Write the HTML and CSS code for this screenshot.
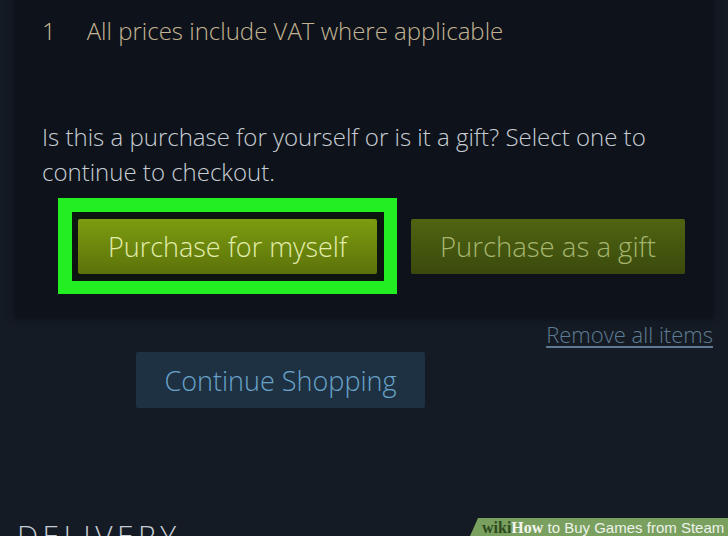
FILE: index.html
```html
<!DOCTYPE html>
<html>
<head>
<meta charset="utf-8">
<link rel="stylesheet" href="styles.css">
</head>
<body>
<div class="page">
  <section class="panel">
    <div class="vat-row">
      <span class="vat-num">1</span>
      <span class="vat-text">All prices include VAT where applicable</span>
    </div>
    <p class="question">Is this a purchase for yourself or is it a gift? Select one to continue to checkout.</p>
    <div class="choices">
      <div class="highlight">
        <div class="highlight-inner">
          <button class="btn btn-self">Purchase for myself</button>
        </div>
      </div>
      <button class="btn btn-gift">Purchase as a gift</button>
    </div>
  </section>
  <div class="remove-row"><a class="remove">Remove all items</a></div>
  <div class="continue-row"><button class="continue">Continue Shopping</button></div>
  <h2 class="delivery">DELIVERY</h2>
  <div class="watermark"><span class="wm-wiki">wiki</span><span class="wm-how">How</span><span class="wm-title"> to Buy Games from Steam</span></div>
</div>
</body>
</html>
```
FILE: styles.css
```css
html, body {
  margin: 0;
  padding: 0;
  background: #151b24;
  overflow: hidden;
}
.page {
  position: relative;
  width: 728px;
  height: 536px;
  overflow: hidden;
  font-family: "Open Sans", "Noto Sans", sans-serif;
  font-weight: 300;
  background: #151b24;
}
.panel {
  margin: 0 15px 0 15px;
  height: 318px;
  box-sizing: border-box;
  background: #0e131b;
  padding: 14px 0 0 27px;
  box-shadow: 0 0 6px 2px #0f141c;
}
.vat-row {
  display: flex;
  gap: 31px;
  font-size: 24px;
  line-height: 34px;
  color: #c4b392;
}
.vat-num { color: #cbbb97; }
.question {
  margin: 71px 0 0 0;
  width: 640px;
  font-size: 24px;
  line-height: 35px;
  color: #c8ced4;
}
.choices {
  display: flex;
  align-items: center;
  gap: 14px;
  margin: 9px 0 0 16px;
}
.highlight {
  background: #22ee22;
  padding: 14px 13px 13px 14px;
}
.highlight-inner {
  background: #0d1510;
  padding: 7px 7px 7px 6px;
}
.btn {
  display: block;
  border: none;
  border-radius: 2px;
  font-family: inherit;
  font-weight: 300;
  font-size: 27px;
  height: 55px;
  padding: 0;
}
.btn-self {
  width: 299px;
  background: linear-gradient(#7d9c10, #5b720a);
  color: #e2edac;
}
.btn-gift {
  width: 274px;
  background: linear-gradient(#4f6412, #3b4a0c);
  color: #a6b66e;
  font-size: 27.5px;
}
.remove-row {
  display: flex;
  justify-content: flex-end;
  padding: 2px 15px 0 0;
}
.remove {
  font-size: 22px;
  line-height: 28px;
  color: #5f7b93;
  text-decoration: underline;
  text-underline-offset: 3px;
}
.continue-row {
  padding: 4px 0 0 136px;
}
.continue {
  display: block;
  width: 289px;
  height: 56px;
  border: none;
  border-radius: 2px;
  background: #1e3142;
  color: #69a3c9;
  font-family: inherit;
  font-weight: 300;
  font-size: 27px;
  padding: 0;
}
.delivery {
  margin: 113px 0 0 17px;
  font-weight: 300;
  font-size: 30px;
  letter-spacing: 4.4px;
  color: #c5ccd3;
  line-height: 30px;
}
.watermark {
  position: absolute;
  right: 0;
  bottom: 0;
  width: 258px;
  height: 18px;
  background: #7aa060;
  clip-path: polygon(8px 0, 100% 0, 100% 100%, 0 100%);
  font-family: "Liberation Sans", Arial, sans-serif;
  font-weight: 400;
  font-size: 15px;
  line-height: 20px;
  padding-left: 12px;
  box-sizing: border-box;
  white-space: nowrap;
  color: #eef3ea;
}
.wm-wiki {
  font-family: "Liberation Serif", serif;
  font-weight: 700;
  color: #2c4a1c;
  font-size: 16px;
}
.wm-how {
  font-family: "Liberation Serif", serif;
  font-weight: 700;
  color: #f2f6ee;
  font-size: 16px;
}
```
